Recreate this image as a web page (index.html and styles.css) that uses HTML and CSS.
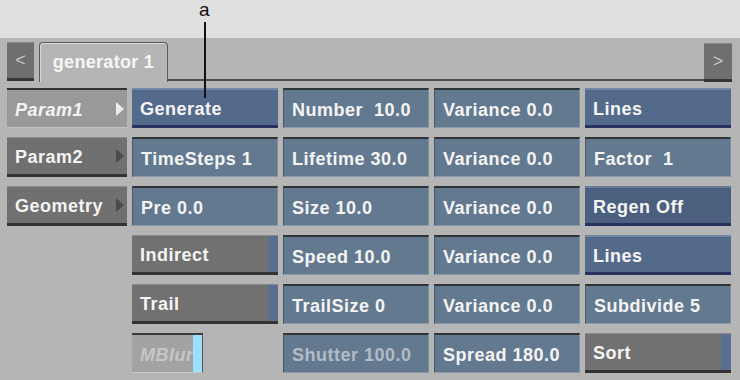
FILE: index.html
```html
<!DOCTYPE html>
<html lang="en">
<head>
    <meta charset="UTF-8">
    <title>generator1</title>
    <link rel="stylesheet" href="styles.css">
</head>
<body>
<div id="screen">
    <div class="callout">
        <span class="callout-label">a</span>
        <span class="callout-line"></span>
    </div>
    <div class="top"></div>
    <div class="panel">
        <div class="tabbar">
            <div class="arrow-btn">&lt;</div>
            <div class="tab">generator 1</div>
            <div class="tab-rest"></div>
            <div class="arrow-btn right">&gt;</div>
        </div>
        <div class="grid">
            <div class="menu selected">Param1<i class="tri"></i></div>
            <div class="btn">Generate</div>
            <div class="field">Number&nbsp; 10.0</div>
            <div class="field">Variance 0.0</div>
            <div class="btn">Lines</div>

            <div class="menu">Param2<i class="tri"></i></div>
            <div class="field">TimeSteps 1</div>
            <div class="field">Lifetime 30.0</div>
            <div class="field">Variance 0.0</div>
            <div class="field">Factor&nbsp; 1</div>

            <div class="menu">Geometry<i class="tri"></i></div>
            <div class="field">Pre 0.0</div>
            <div class="field">Size 10.0</div>
            <div class="field">Variance 0.0</div>
            <div class="btn dark">Regen Off</div>

            <div class="empty"></div>
            <div class="toggle">Indirect</div>
            <div class="field">Speed 10.0</div>
            <div class="field">Variance 0.0</div>
            <div class="btn">Lines</div>

            <div class="empty"></div>
            <div class="toggle">Trail</div>
            <div class="field">TrailSize 0</div>
            <div class="field">Variance 0.0</div>
            <div class="field">Subdivide 5</div>

            <div class="empty"></div>
            <div class="cell"><div class="toggle off">MBlur</div></div>
            <div class="field dim">Shutter 100.0</div>
            <div class="field">Spread 180.0</div>
            <div class="toggle">Sort</div>
        </div>
    </div>
</div>
</body>
</html>
```

FILE: styles.css
```css
body,div{
    margin:0;
    padding:0;
}
body{
    background:#b5b5b5;
    font:bold 18px/20px "Liberation Sans", Arial, sans-serif;
    color:#f4f4f4;
}
#screen{
    position:relative;
    width:740px;
    height:380px;
    overflow:hidden;
}
.top{height:38px;background:#e0e0e0;}
.panel{height:342px;background:#b5b5b5;}

/* callout */
.callout{position:absolute;left:196px;top:0;width:20px;height:100px;z-index:2;}
.callout-label{position:absolute;left:3px;top:0;font:normal 19px/20px "Liberation Sans", Arial, sans-serif;color:#111;}
.callout-line{position:absolute;left:8px;top:22px;width:2px;height:76px;background:#111;}

/* tabs */
.tabbar{display:flex;align-items:flex-end;height:44px;padding:0 8px 0 7px;}
.arrow-btn{
    width:27px;height:35px;margin-bottom:1px;
    background:#6f6f6f;border-top:1px solid #8a8a8a;border-bottom:3px solid #363636;
    box-sizing:content-box;
    color:#c8c8c8;font:normal 18px/35px "Liberation Sans", Arial, sans-serif;text-align:center;
}
.tab{
    margin-left:5px;width:127px;height:39px;
    border:1px solid #5a5a5a;border-bottom:none;border-radius:4px 4px 0 0;
    box-shadow:inset 1px 1px 0 #d8d8d8;
    line-height:38px;text-align:center;color:#f6f6f6;letter-spacing:0.3px;
}
.tab-rest{flex:1;height:2px;background:#4a4a4a;align-self:flex-end;margin-bottom:1px;}
.arrow-btn.right{margin-bottom:0;width:28px;}

/* grid */
.grid{
    display:grid;
    grid-template-columns:120px repeat(4,146px);
    grid-auto-rows:40px;
    column-gap:5px;
    row-gap:9px;
    padding:6px 0 0 7px;
}
.grid > div{box-sizing:border-box;letter-spacing:0.5px;white-space:nowrap;overflow:hidden;}
.btn,.field,.menu,.toggle{display:flex;align-items:center;padding:2px 0 0 8px;}
.btn{
    background:#546a8b;
    border-top:2px solid #7287a6;
    border-bottom:3px solid #2a3160;
}
.btn.dark{background:#4b5f7f;border-top-color:#677b99;}
.field{
    background:#63798f;
    border-top:2px solid #2f3336;
    border-left:1px solid #4a5663;
    border-bottom:1px solid #8a9aaa;
    border-right:1px solid #7f8f9f;
}
.field.dim{color:#b3bcc6;}
.menu{
    position:relative;
    background:#707070;
    border-top:1px solid #8c8c8c;
    border-bottom:3px solid #333;
}
.menu.selected{
    background:#999;
    border-top:2px solid #333;
    border-bottom:1px solid #c4c4c4;
    font-style:italic;
}
.tri{
    position:absolute;right:3px;top:50%;margin-top:-7px;
    width:0;height:0;
    border-top:7px solid transparent;border-bottom:7px solid transparent;
    border-left:8px solid #4b4b4b;
}
.menu.selected .tri{border-left-color:#ececec;}
.toggle{
    background:#717171;
    border-top:1px solid #8a8a8a;
    border-bottom:3px solid #333;
    box-shadow:inset -10px 0 0 #5a6f8f;
}
.cell{display:flex;}
.toggle.off{
    box-sizing:border-box;
    width:71px;height:40px;
    background:#a3a3a3;
    border-top:2px solid #3a3a3a;
    border-bottom:1px solid #c8c8c8;
    border-right:1px solid #555;
    box-shadow:inset -9px 0 0 #9de0ff;
    color:#c6c6c6;font-style:italic;
}
```
